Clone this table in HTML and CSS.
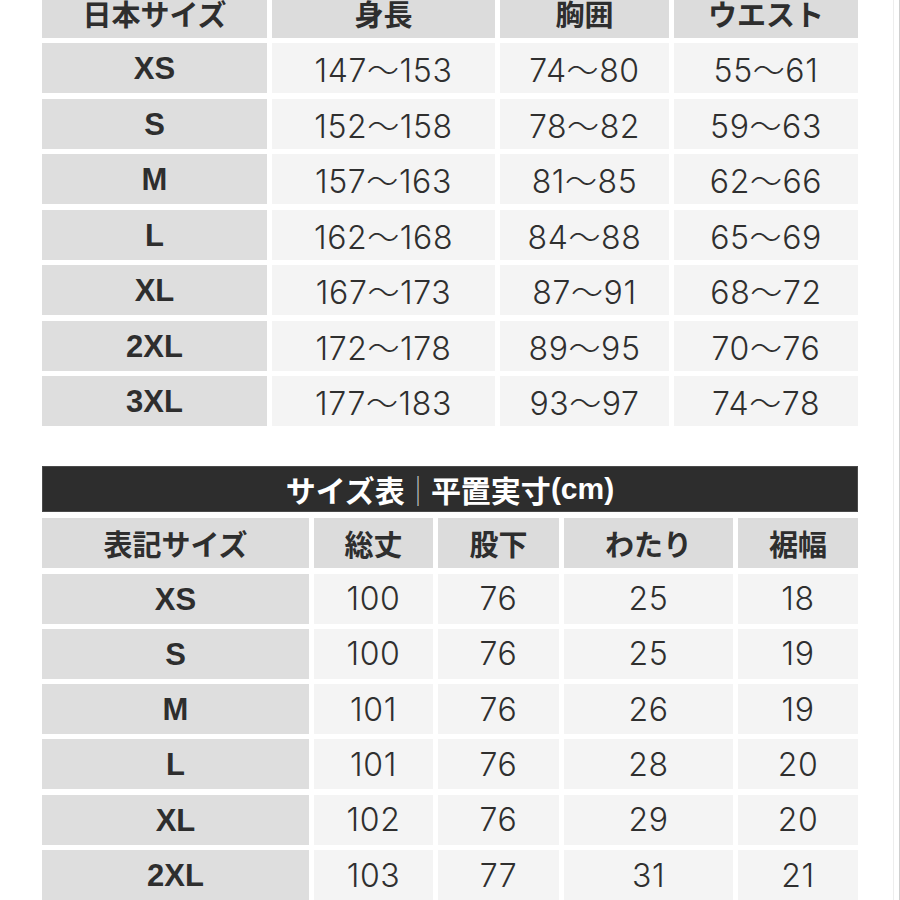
FILE: index.html
```html
<!DOCTYPE html>
<html lang="ja">
<head>
<meta charset="utf-8">
<title>サイズ表</title>
<link rel="stylesheet" href="styles.css">
</head>
<body>
<div class="page">
  <main class="content">
    <section class="table t1">
      <div class="row">
        <div class="cell head">日本サイズ</div>
        <div class="cell head">身長</div>
        <div class="cell head">胸囲</div>
        <div class="cell head">ウエスト</div>
      </div>
      <div class="row"><div class="cell key">XS</div><div class="cell val">147～153</div><div class="cell val">74～80</div><div class="cell val">55～61</div></div>
      <div class="row"><div class="cell key">S</div><div class="cell val">152～158</div><div class="cell val">78～82</div><div class="cell val">59～63</div></div>
      <div class="row"><div class="cell key">M</div><div class="cell val">157～163</div><div class="cell val">81～85</div><div class="cell val">62～66</div></div>
      <div class="row"><div class="cell key">L</div><div class="cell val">162～168</div><div class="cell val">84～88</div><div class="cell val">65～69</div></div>
      <div class="row"><div class="cell key">XL</div><div class="cell val">167～173</div><div class="cell val">87～91</div><div class="cell val">68～72</div></div>
      <div class="row"><div class="cell key">2XL</div><div class="cell val">172～178</div><div class="cell val">89～95</div><div class="cell val">70～76</div></div>
      <div class="row"><div class="cell key">3XL</div><div class="cell val">177～183</div><div class="cell val">93～97</div><div class="cell val">74～78</div></div>
    </section>

    <div class="title">サイズ表<span class="sep">｜</span>平置実寸<span class="unit">(cm)</span></div>

    <section class="table t2">
      <div class="row">
        <div class="cell head">表記サイズ</div>
        <div class="cell head">総丈</div>
        <div class="cell head">股下</div>
        <div class="cell head">わたり</div>
        <div class="cell head">裾幅</div>
      </div>
      <div class="row"><div class="cell key">XS</div><div class="cell val">100</div><div class="cell val">76</div><div class="cell val">25</div><div class="cell val">18</div></div>
      <div class="row"><div class="cell key">S</div><div class="cell val">100</div><div class="cell val">76</div><div class="cell val">25</div><div class="cell val">19</div></div>
      <div class="row"><div class="cell key">M</div><div class="cell val">101</div><div class="cell val">76</div><div class="cell val">26</div><div class="cell val">19</div></div>
      <div class="row"><div class="cell key">L</div><div class="cell val">101</div><div class="cell val">76</div><div class="cell val">28</div><div class="cell val">20</div></div>
      <div class="row"><div class="cell key">XL</div><div class="cell val">102</div><div class="cell val">76</div><div class="cell val">29</div><div class="cell val">20</div></div>
      <div class="row"><div class="cell key">2XL</div><div class="cell val">103</div><div class="cell val">77</div><div class="cell val">31</div><div class="cell val">21</div></div>
    </section>
  </main>
  <div class="rail"></div>
</div>
</body>
</html>
```

FILE: styles.css
```css
html, body {
  margin: 0;
  padding: 0;
  background: #ffffff;
}

body {
  font-family: "Noto Sans CJK JP", "Noto Sans", sans-serif;
  color: #333333;
}

.page {
  display: flex;
  height: 900px;
  overflow: hidden;
}

.content {
  flex: 1;
  padding: 0 35px 0 42px;
  display: flex;
  flex-direction: column;
}

.rail {
  width: 5px;
  border-left: 1px solid #ededed;
  border-right: 1px solid #cfcfcf;
}

.table {
  display: flex;
  flex-direction: column;
  gap: 5.5px;
  width: 816px;
}

.t1 {
  margin-top: -12.5px;
}

.t2 {
  margin-top: 6px;
  gap: 5.3px;
}

.row {
  display: grid;
  gap: 5px;
  height: 50px;
}

.t1 .row {
  grid-template-columns: 225fr 223fr 169fr 184fr;
}

.t2 .row {
  grid-template-columns: 267fr 119fr 121fr 169fr 120fr;
}

.cell {
  display: flex;
  align-items: center;
  justify-content: center;
  white-space: nowrap;
}

.head {
  background: #dcdcdc;
  font-weight: 700;
  font-size: 29px;
  color: #2e2e2e;
}

.key {
  background: #dedede;
  font-family: "Liberation Sans", "Noto Sans CJK JP", sans-serif;
  font-weight: 700;
  font-size: 31px;
  color: #2e2e2e;
  padding-top: 2px;
  box-sizing: border-box;
}

.val {
  background: #f4f4f4;
  font-family: "Inter", "Noto Sans CJK JP", sans-serif;
  font-weight: 300;
  font-size: 32px;
  letter-spacing: 0.6px;
  color: #2f2f2f;
}

.title {
  margin-top: 40px;
  width: 816px;
  height: 50px;
  box-sizing: border-box;
  border: 1px solid #4a4a4a;
  background: #2d2d2d;
  color: #ffffff;
  font-weight: 700;
  font-size: 30px;
  display: flex;
  align-items: center;
  justify-content: center;
  white-space: nowrap;
}

.sep {
  font-weight: 300;
  color: #bdbdbd;
  margin: 0 -2px;
}

.unit {
  font-family: "Liberation Sans", "Noto Sans CJK JP", sans-serif;
  font-weight: 700;
}
```
